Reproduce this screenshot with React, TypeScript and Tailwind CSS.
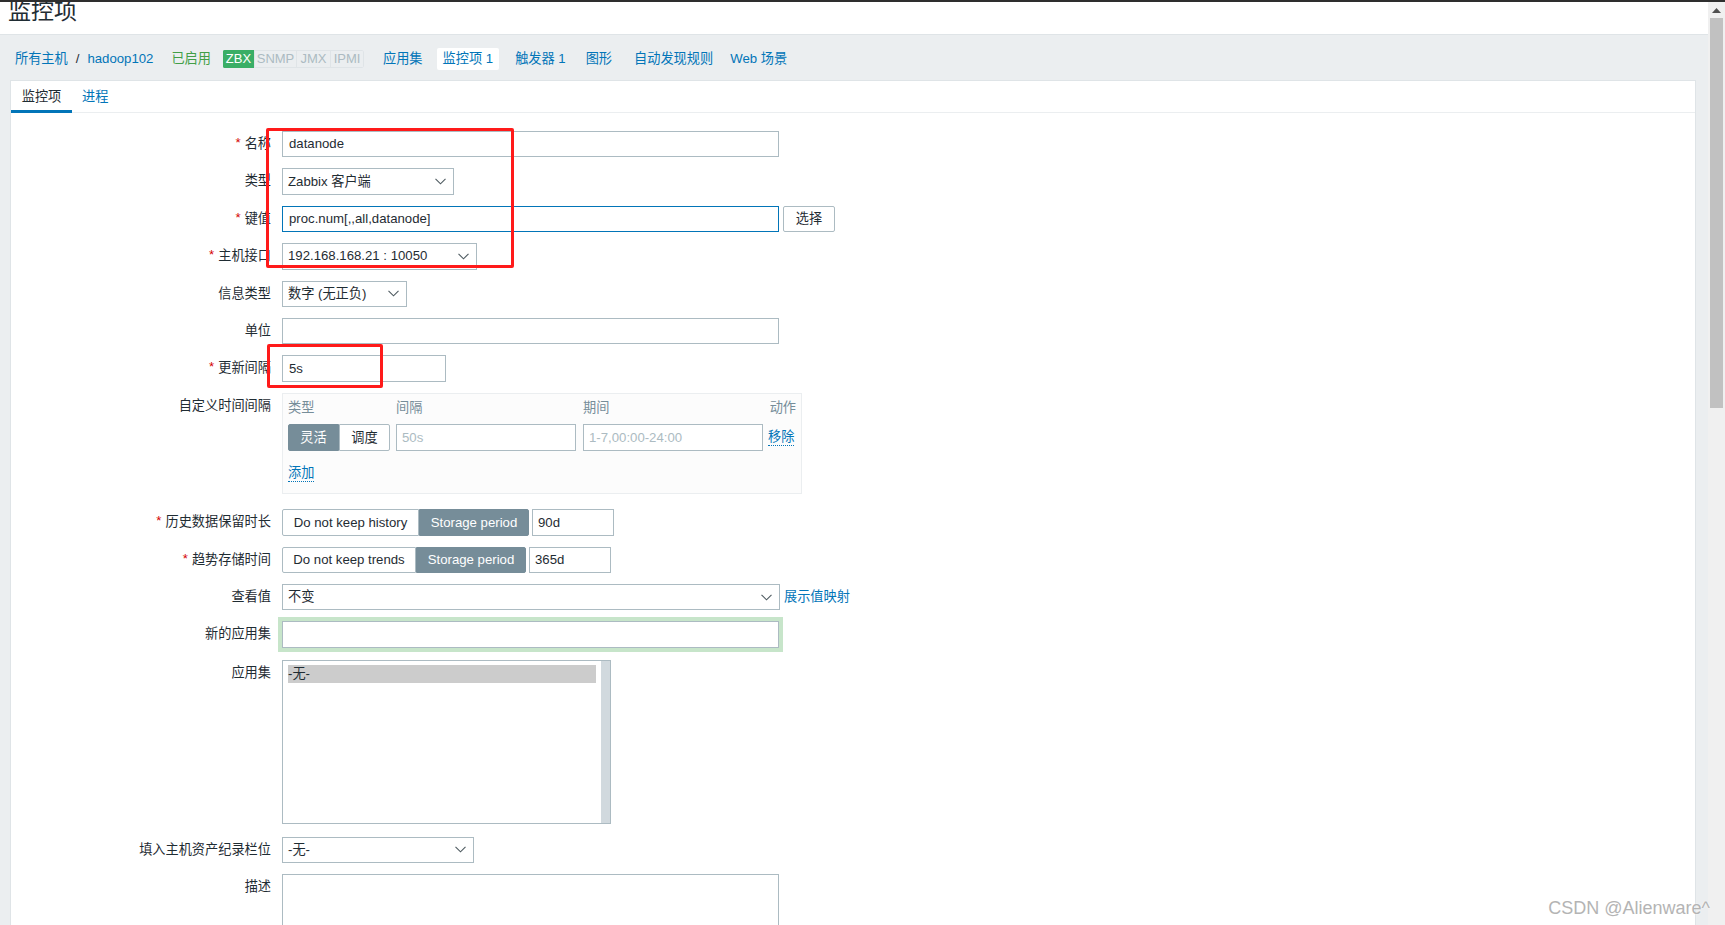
import React from "react";

function Chevron() {
  return (
    <svg width="11" height="7" viewBox="0 0 11 7" className="shrink-0">
      <path d="M0.5 0.8 L5.5 5.8 L10.5 0.8" fill="none" stroke="#4f5b61" strokeWidth="1.1" />
    </svg>
  );
}

function Select({ w, text }: { w: string; text: string }) {
  return (
    <div className={`${w} h-[26.4px] border border-[#acbbc2] bg-white flex items-center justify-between pl-[5px] pr-[7px]`}>
      <span className="whitespace-nowrap">{text}</span>
      <Chevron />
    </div>
  );
}

function Input({ w, text, extra }: { w: string; text?: string; extra?: string }) {
  return (
    <div className={`${w} h-[26.4px] border bg-white flex items-center px-[6px] whitespace-nowrap ${extra ?? "border-[#acbbc2]"}`}>
      {text}
    </div>
  );
}

function Label({ text, req }: { text: string; req?: boolean }) {
  return (
    <div className="w-[260px] shrink-0 text-right h-[26.4px] leading-[26.4px] whitespace-nowrap">
      {req && <span className="text-[#d40000] mr-[4px] relative top-[-1px]">*</span>}
      {text}
    </div>
  );
}

function Row({
  label,
  req,
  children,
  className,
}: {
  label: string;
  req?: boolean;
  children: React.ReactNode;
  className?: string;
}) {
  return (
    <div className={`flex items-start shrink-0 ${className ?? ""}`}>
      <Label text={label} req={req} />
      <div className="ml-[11px] flex items-start">{children}</div>
    </div>
  );
}

function Storage({ left, lw, rw, value }: { left: string; lw: string; rw: string; value: string }) {
  return (
    <div className="flex items-center">
      <div className="flex h-[26.4px]">
        <div className={`${lw} border border-[#acbbc2] rounded-l-[2px] bg-white flex items-center justify-center whitespace-nowrap`}>
          {left}
        </div>
        <div className={`${rw} bg-[#768d99] border border-[#768d99] text-white rounded-r-[2px] flex items-center justify-center whitespace-nowrap`}>
          Storage period
        </div>
      </div>
      <div className="ml-[3px] w-[82px] h-[26.4px] border border-[#acbbc2] px-[5px] flex items-center">{value}</div>
    </div>
  );
}

export default function App() {
  return (
    <div className="w-[1725px] h-[925px] overflow-hidden relative bg-[#ebeef0] text-[#1f2c33] text-[13.2px] font-['Liberation_Sans','Noto_Sans_CJK_SC',sans-serif]">
      <div className="h-[2px] bg-[#2e2e2e]" />
      <div className="flex h-[923px]">
        <div className="flex-1 flex flex-col min-h-0">
          {/* header */}
          <div className="h-[33px] shrink-0 bg-white border-b border-[#dfe4e7] overflow-hidden pl-[8px]">
            <div className="text-[23px] leading-[24px] mt-[-5px] font-['Noto_Sans_CJK_SC',sans-serif] text-[#1f2c33]">监控项</div>
          </div>
          {/* nav */}
          <div className="flex shrink-0 items-center h-[22px] mt-[13px] mb-[10px] pl-[15px] whitespace-nowrap">
            <span className="text-[#0275b8]">所有主机</span>
            <span className="ml-[8px]">/</span>
            <span className="ml-[8px] text-[#0275b8]">hadoop102</span>
            <span className="ml-[18px] text-[#429e47]">已启用</span>
            <div className="ml-[12px] flex h-[18px] text-[13px] leading-[16px] rounded-[2px] overflow-hidden">
              <span className="w-[31px] text-center bg-[#3aae66] text-white border border-[#3aae66]">ZBX</span>
              <span className="w-[43px] text-center bg-[#ebeef0] text-[#acbbc2] border border-[#dfe4e7]">SNMP</span>
              <span className="w-[34px] text-center bg-[#ebeef0] text-[#acbbc2] border border-[#dfe4e7] border-l-0">JMX</span>
              <span className="w-[33px] text-center bg-[#ebeef0] text-[#acbbc2] border border-[#dfe4e7] border-l-0 rounded-r-[2px]">IPMI</span>
            </div>
            <span className="ml-[19px] text-[#0275b8]">应用集</span>
            <span className="ml-[14px] h-[22px] px-[6px] bg-white rounded-[2px] flex items-center text-[#0275b8]">监控项 1</span>
            <span className="ml-[16px] text-[#0275b8]">触发器 1</span>
            <span className="ml-[20px] text-[#0275b8]">图形</span>
            <span className="ml-[22px] text-[#0275b8]">自动发现规则</span>
            <span className="ml-[17px] text-[#0275b8]">Web 场景</span>
          </div>
          {/* container */}
          <div className="ml-[10px] mr-[12px] flex-1 min-h-0 overflow-hidden bg-white border border-[#dfe4e7] border-b-0">
            <div className="h-[32px] border-b border-[#ebeef0] flex items-stretch">
              <div className="w-[61px] flex items-center justify-center border-b-[3px] border-[#0275b8] pt-[3px] mb-[-1px]">监控项</div>
              <div className="ml-[10px] flex items-center text-[#0275b8]">进程</div>
            </div>
            <div className="pt-[18px] flex flex-col gap-[11px]">
              <Row label="名称" req>
                <Input w="w-[497px]" text="datanode" />
              </Row>
              <Row label="类型">
                <Select w="w-[172px]" text="Zabbix 客户端" />
              </Row>
              <Row label="键值" req>
                <Input w="w-[497px]" text="proc.num[,,all,datanode]" extra="border-[#0275b8]" />
                <div className="ml-[4px] w-[52px] h-[26.4px] border border-[#acbbc2] rounded-[2px] bg-white flex items-center justify-center">
                  选择
                </div>
              </Row>
              <Row label="主机接口" req>
                <Select w="w-[195px]" text="192.168.168.21 : 10050" />
              </Row>
              <Row label="信息类型">
                <Select w="w-[125px]" text="数字 (无正负)" />
              </Row>
              <Row label="单位">
                <Input w="w-[497px]" />
              </Row>
              <Row label="更新间隔" req>
                <Input w="w-[164px]" text="5s" />
              </Row>
              <Row label="自定义时间间隔">
                <div className="w-[520px] h-[101px] border border-[#ebeef0] bg-[#fcfcfc] px-[5px] pt-[4px]">
                  <div className="flex h-[20px] items-center text-[#768d99]">
                    <span className="w-[108px]">类型</span>
                    <span className="w-[187px]">间隔</span>
                    <span className="flex-1">期间</span>
                    <span>动作</span>
                  </div>
                  <div className="flex items-center mt-[6.5px]">
                    <div className="flex h-[26.4px] w-[102px]">
                      <div className="flex-1 bg-[#768d99] border border-[#768d99] text-white rounded-l-[2px] flex items-center justify-center">灵活</div>
                      <div className="flex-1 border border-[#acbbc2] rounded-r-[2px] bg-white flex items-center justify-center">调度</div>
                    </div>
                    <div className="ml-[6px] w-[180px] h-[26.4px] border border-[#acbbc2] bg-white px-[5px] flex items-center text-[#acbbc2]">50s</div>
                    <div className="ml-[7px] w-[180px] h-[26.4px] border border-[#acbbc2] bg-white px-[5px] flex items-center text-[#acbbc2]">1-7,00:00-24:00</div>
                    <span className="ml-[5px] text-[#0275b8] border-b border-dotted border-[#0275b8] leading-[17px]">移除</span>
                  </div>
                  <div className="mt-[12px] h-[20px] flex items-center">
                    <span className="text-[#0275b8] border-b border-dotted border-[#0275b8] leading-[17px]">添加</span>
                  </div>
                </div>
              </Row>
              <Row label="历史数据保留时长" req className="mt-[4.5px]">
                <Storage left="Do not keep history" lw="w-[137px]" rw="w-[110px]" value="90d" />
              </Row>
              <Row label="趋势存储时间" req>
                <Storage left="Do not keep trends" lw="w-[134px]" rw="w-[110px]" value="365d" />
              </Row>
              <Row label="查看值">
                <Select w="w-[498px]" text="不变" />
                <span className="ml-[4px] h-[26.4px] flex items-center text-[#0275b8]">展示值映射</span>
              </Row>
              <Row label="新的应用集">
                <div className="w-[497px] h-[26.4px] border border-[#acbbc2] bg-white shadow-[0_0_0_4px_#c7e5ca]" />
              </Row>
              <Row label="应用集" className="mt-[1px]">
                <div className="w-[329px] h-[164px] border border-[#acbbc2] bg-white flex">
                  <div className="flex-1 pl-[5px] pt-[4.5px] pr-[5px]">
                    <div className="h-[18px] bg-[#cccccc] flex items-center">-无-</div>
                  </div>
                  <div className="w-[9px] bg-[#d1d9de]" />
                </div>
              </Row>
              <Row label="填入主机资产纪录栏位" className="mt-[2px]">
                <Select w="w-[192px]" text="-无-" />
              </Row>
              <Row label="描述">
                <div className="w-[497px] h-[120px] border border-[#acbbc2] bg-white" />
              </Row>
            </div>
          </div>
        </div>
        {/* scrollbar */}
        <div className="w-[17px] shrink-0 bg-[#f0f0f0] relative">
          <div className="h-[16px] flex items-center justify-center">
            <svg width="9" height="5" viewBox="0 0 9 5">
              <path d="M0 5 L4.5 0 L9 5 Z" fill="#505050" />
            </svg>
          </div>
          <div className="mx-[2px] h-[390px] bg-[#c1c1c1]" />
        </div>
      </div>

      {/* red annotations */}
      <div className="absolute left-[266px] top-[128px] w-[248px] h-[140px] border-[3px] border-[#ff1a1a] rounded-[2px] pointer-events-none" />
      <div className="absolute left-[267px] top-[344px] w-[116px] h-[44px] border-[3px] border-[#ff1a1a] rounded-[2px] pointer-events-none" />

      {/* watermark */}
      <div className="absolute right-[15px] bottom-[6px] text-[18px] leading-[21px] text-[#b4b4b4] font-['Liberation_Sans',sans-serif] [text-shadow:0_0_2px_#ffffff]">
        CSDN @Alienware^
      </div>
    </div>
  );
}
